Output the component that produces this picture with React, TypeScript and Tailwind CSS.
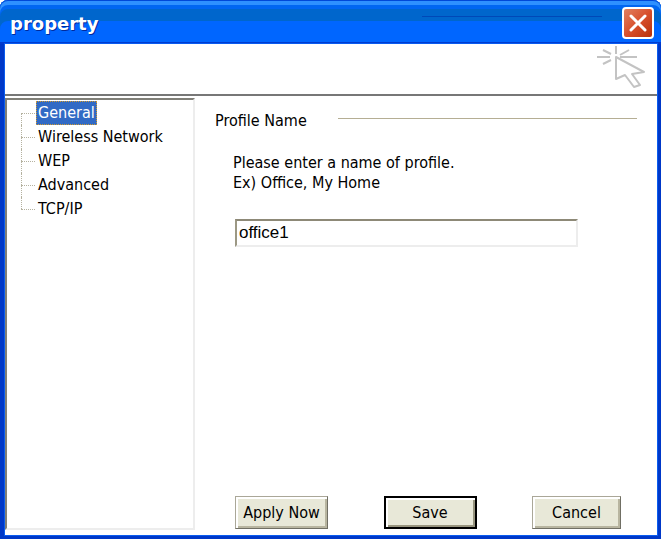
import { useState } from 'react';
import { clsx } from 'clsx';

const pages = ['General', 'Wireless Network', 'WEP', 'Advanced', 'TCP/IP'];

function ClickCursorIcon() {
    return (
        <svg width="50" height="44" viewBox="0 0 50 44" fill="none" stroke="#c3c3c3" strokeWidth="2" aria-hidden="true">
            <path d="M20 0V8M1 11H14M24 11H41M7 4L15 8M33 4L24 9M7 18L15 14" />
            <path d="M20 11V33L29 29L38 41L44 39L36 28L48 26Z" strokeLinejoin="round" />
        </svg>
    );
}

function TitleBar() {
    return (
        <header className="flex h-11 items-center rounded-t-lg border-b-2 border-[#003bd0] bg-[#0066ff] pr-[7px] pl-2.5 shadow-[inset_0_1px_#0048d8,inset_0_5px_#2e90ff,inset_0_9px_#0066f2,inset_0_21px_#0066cc]">
            <h1 className="pt-1.5 text-lg leading-6 font-bold text-white [font-family:'DejaVu_Sans',sans-serif] [text-shadow:1px_1px_#002a9c]">
                property
            </h1>
            <span className="mt-4 mr-5 ml-auto h-px w-[180px] self-start bg-[#0048b8]" />
            <button
                type="button"
                aria-label="Close"
                className="mt-1 flex size-8 items-center justify-center rounded-sm border-2 border-white bg-linear-to-br from-[#e08060] via-[#d8502c] to-[#b83008]"
            >
                <svg width="18" height="18" viewBox="0 0 18 18" stroke="white" strokeWidth="3" strokeLinecap="round" aria-hidden="true">
                    <path d="M2 2L16 16M16 2L2 16" />
                </svg>
            </button>
        </header>
    );
}

interface PageTreeProps {
    selected: string;
    onSelect: (page: string) => void;
}

function PageTree({ selected, onSelect }: PageTreeProps) {
    return (
        <nav className="w-[190px] shrink-0 border-2 border-t-[#807f78] border-r-[#ededed] border-b-[#ededed] border-l-[#807f78] pt-px pl-3.5">
            <ul>
                {pages.map((page, i) => (
                    <li key={page} className="flex h-6 items-center">
                        {/* dotted branch lines */}
                        <span className="mr-px w-3.5">
                            <span className={clsx('block h-3 border-dotted border-[#b5b2a0]', i > 0 && 'border-l')} />
                            <span className={clsx('block h-3 border-t border-dotted border-[#b5b2a0]', i < pages.length - 1 && 'border-l')} />
                        </span>
                        <button
                            type="button"
                            onClick={() => onSelect(page)}
                            className={clsx(
                                'h-6 border px-px leading-5 whitespace-nowrap',
                                page === selected ? 'border-dotted border-[#d09a30] bg-[#316ac5] text-white' : 'border-transparent'
                            )}
                        >
                            {page}
                        </button>
                    </li>
                ))}
            </ul>
        </nav>
    );
}

const buttonClass = 'h-[33px] bg-[#e8e8d8] leading-5 whitespace-nowrap';
const plainButton =
    'border border-[#aaa798] border-r-[#706f64] border-b-[#706f64] shadow-[inset_2px_2px_#ffffff,inset_-2px_-2px_#b8b5a0]';
const defaultButton =
    'border-2 border-black shadow-[inset_2px_2px_#ffffff,inset_-2px_-2px_#98957f]';

export default function App() {
    const [page, setPage] = useState('General');
    const [name, setName] = useState('office1');

    return (
        <div className="min-h-screen bg-white pr-[5px] pb-0.5 text-base text-black [font-family:'DejaVu_Sans_Condensed','DejaVu_Sans',sans-serif]">
            <div className="flex min-h-[calc(100vh-2px)] flex-col rounded-t-lg bg-[#0038c8]">
                <TitleBar />
                <div className="mr-1 mb-1 ml-[5px] flex flex-1 flex-col bg-white shadow-[0_0_0_1px_#0a5cf0]">
                    <div className="flex h-[52px] justify-end border-b-2 border-[#777777] pt-0.5 pr-[11px]">
                        <ClickCursorIcon />
                    </div>
                    <div className="flex flex-1 pt-0.5 pb-[5px]">
                        <PageTree selected={page} onSelect={setPage} />
                        <form className="flex flex-1 flex-col pt-3 pb-px pl-5" onSubmit={(e) => e.preventDefault()}>
                            <div className="flex pr-5">
                                <h2 className="w-[123px] shrink-0 pt-px leading-5">Profile Name</h2>
                                <span className="mt-2 h-px flex-1 bg-[#b5ae94]" />
                            </div>
                            <div className="pt-[22px] pr-[79px] pl-[18px]">
                                <label htmlFor="profile" className="block leading-5">
                                    Please enter a name of profile.
                                    <br />
                                    Ex) Office, My Home
                                </label>
                                <div className="mt-[26px] ml-0.5">
                                    <input
                                        id="profile"
                                        type="text"
                                        value={name}
                                        onChange={(e) => setName(e.target.value)}
                                        className="block h-7 w-full border-2 border-t-[#8d8977] border-r-[#ededed] border-b-[#ededed] border-l-[#9c9884] bg-white px-0.5 text-[17px] outline-none [font-family:'Liberation_Sans',Arial,sans-serif]"
                                    />
                                </div>
                            </div>
                            <div className="mt-auto flex justify-between pr-9 pl-5">
                                <button type="button" className={clsx(buttonClass, plainButton, 'w-[93px]')}>Apply Now</button>
                                <button type="submit" className={clsx(buttonClass, defaultButton, 'w-[93px]')}>Save</button>
                                <button type="button" className={clsx(buttonClass, plainButton, 'w-[89px]')}>Cancel</button>
                            </div>
                        </form>
                    </div>
                </div>
            </div>
        </div>
    );
}
